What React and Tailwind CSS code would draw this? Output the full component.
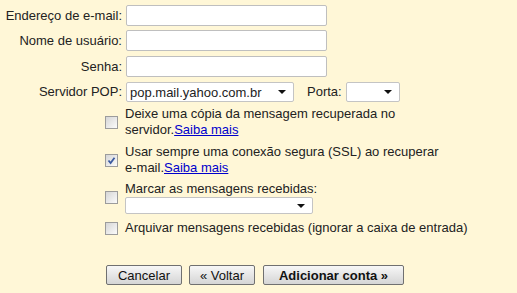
import React from 'react';

function Arrow() {
  return (
    <svg width="8" height="4" viewBox="0 0 8 4" className="shrink-0">
      <path d="M0 0 L8 0 L4 4 Z" fill="#111" />
    </svg>
  );
}

function FakeSelect({ value, className }) {
  return (
    <div
      className={
        'flex items-center justify-between bg-white border border-[#c4c4c4] rounded-[2px] pl-[3px] pr-[7px] ' +
        className
      }
    >
      <span className="leading-none">{value}</span>
      <Arrow />
    </div>
  );
}

function Field({ label, children, mt }) {
  return (
    <div className={'flex items-center ' + mt}>
      <label className="w-[122px] text-right whitespace-nowrap">{label}</label>
      <div className="ml-[4px] flex items-center">{children}</div>
    </div>
  );
}

function Box({ checked }) {
  return (
    <span className="w-[13px] h-[13px] shrink-0 border border-[#9c9c9c] bg-linear-to-br from-[#d6d6d6] to-[#fbfbfb] flex items-center justify-center">
      {checked && (
        <svg width="9" height="9" viewBox="0 0 9 9">
          <path d="M1.5 4.5 L3.6 7 L7.5 1.8" fill="none" stroke="#3b5aa0" strokeWidth="1.8" />
        </svg>
      )}
    </span>
  );
}

function CheckRow({ checked, mt, children }) {
  return (
    <div className={'flex items-center pl-[105px] ' + mt}>
      <Box checked={checked} />
      <div className="ml-[7px] leading-[16px]">{children}</div>
    </div>
  );
}

const input = 'w-[201px] h-[21px] bg-white border border-[#bfbfbf] rounded-[2px]';

export default function App() {
  return (
    <div className="w-[517px] h-[293px] overflow-hidden bg-[#fff7d7] text-[13px] text-[#222] font-['Liberation_Sans',Arial,sans-serif] pt-[5px]">
      <Field label="Endereço de e-mail:" mt="">
        <div className={input} />
      </Field>
      <Field label="Nome de usuário:" mt="mt-[4px]">
        <div className={input} />
      </Field>
      <Field label="Senha:" mt="mt-[5px]">
        <div className={input} />
      </Field>
      <Field label="Servidor POP:" mt="mt-[5px]">
        <FakeSelect value="pop.mail.yahoo.com.br" className="w-[168px] h-[20px]" />
        <span className="ml-[13px]">Porta:</span>
        <FakeSelect value="" className="ml-[4px] w-[54px] h-[20px]" />
      </Field>

      <CheckRow mt="mt-[4px]">
        Deixe uma cópia da mensagem recuperada no
        <br />
        servidor.<a href="#" className="text-[#0000cc] underline">Saiba mais</a>
      </CheckRow>
      <CheckRow checked mt="mt-[6px]">
        Usar sempre uma conexão segura (SSL) ao recuperar
        <br />
        e-mail.<a href="#" className="text-[#0000cc] underline">Saiba mais</a>
      </CheckRow>
      <CheckRow mt="mt-[5px]">
        <div>Marcar as mensagens recebidas:</div>
        <FakeSelect value="" className="w-[188px] h-[17px]" />
      </CheckRow>
      <CheckRow mt="mt-[6px]">
        <span className="whitespace-nowrap">Arquivar mensagens recebidas (ignorar a caixa de entrada)</span>
      </CheckRow>

      <div className="flex pl-[106px] mt-[29px]">
        <button className="w-[76px] h-[20px] border border-[#707070] rounded-[2px] bg-linear-to-b from-[#f7f7f7] to-[#d5d5d5] text-[#111]">
          Cancelar
        </button>
        <button className="ml-[7px] w-[66px] h-[20px] border border-[#707070] rounded-[2px] bg-linear-to-b from-[#f7f7f7] to-[#d5d5d5] text-[#111]">
          « Voltar
        </button>
        <button className="ml-[8px] w-[141px] h-[20px] border border-[#707070] rounded-[2px] bg-linear-to-b from-[#f7f7f7] to-[#d5d5d5] text-[#111] font-bold">
          Adicionar conta »
        </button>
      </div>
    </div>
  );
}
